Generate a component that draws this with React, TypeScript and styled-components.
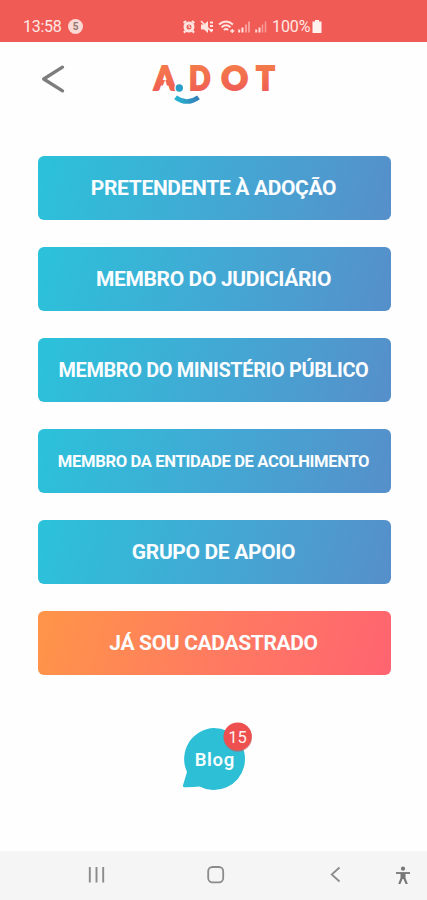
import React from "react";
import styled, { createGlobalStyle } from "styled-components";

const GlobalStyle = createGlobalStyle`
  * { box-sizing: border-box; }
  body { margin: 0; background: #fefefe; font-family: Roboto, "Liberation Sans", sans-serif; }
  svg { display: block; overflow: visible; }
`;

const Screen = styled.div`
  width: 427px;
  height: 900px;
  display: flex;
  flex-direction: column;
  background: #fefefe;
  overflow: hidden;
`;

const StatusBar = styled.header`
  height: 42px;
  flex: none;
  display: flex;
  align-items: center;
  padding: 11px 105px 0 23px;
  background: #f05b56;
  color: #ffe9e4;
  font-size: 16px;
  line-height: 20px;
`;

const Clock = styled.span`
  width: 39px;
  letter-spacing: -0.3px;
`;

const Notice = styled.span`
  width: 15px;
  height: 15px;
  margin-left: 6px;
  border-radius: 50%;
  background: #fcd9d4;
  color: #8f7770;
  font-size: 10px;
  font-weight: 700;
  line-height: 15px;
  text-align: center;
`;

const StatusIcons = styled.div`
  display: flex;
  align-items: center;
  margin-left: auto;
`;

const Percent = styled.span`
  width: 40px;
  letter-spacing: -0.1px;
`;

const TopBar = styled.div`
  height: 114px;
  flex: none;
  display: flex;
  align-items: flex-start;
  padding: 18px 0 0 38px;
`;

const BackButton = styled.button`
  width: 107px;
  height: 38px;
  padding: 0;
  border: 0;
  background: none;
`;

const Menu = styled.main`
  display: flex;
  flex-direction: column;
  gap: 27px;
  padding: 0 36.5px 0 37.5px;
`;

const MenuButton = styled.button<{ $warm?: boolean; $size?: number }>`
  height: 64px;
  padding: 0 1px 0 0;
  border: 0;
  border-radius: 6px;
  display: flex;
  align-items: center;
  justify-content: center;
  white-space: nowrap;
  color: #fbfdff;
  font-family: inherit;
  font-weight: 700;
  letter-spacing: -0.35px;
  background: ${(p) =>
    p.$warm
      ? "linear-gradient(105deg, #ff9548 0%, #ff7b60 50%, #ff6470 100%)"
      : "linear-gradient(105deg, #2bc2da 0%, #42a9d4 50%, #568fca 100%)"};
  font-size: ${(p) => p.$size ?? 21}px;
`;

const BlogRow = styled.div`
  flex: 1;
  display: flex;
  justify-content: center;
  padding: 43px 0 0 6px;
`;

const NavBar = styled.nav`
  height: 49px;
  flex: none;
  background: #f5f5f5;
`;

const entries = [
  { label: "PRETENDENTE À ADOÇÃO" },
  { label: "MEMBRO DO JUDICIÁRIO" },
  { label: "MEMBRO DO MINISTÉRIO PÚBLICO", size: 19.9 },
  { label: "MEMBRO DA ENTIDADE DE ACOLHIMENTO", size: 16.6 },
  { label: "GRUPO DE APOIO" },
  { label: "JÁ SOU CADASTRADO", warm: true },
];

function StatusGlyphs() {
  return (
    <svg width="90" height="16" viewBox="182 18 90 16" fill="none" stroke="#ffe4df">
      <circle cx="189" cy="26" r="4" strokeWidth="3" />
      <path d="M183.6 22l2.5-2M194.4 22l-2.5-2M185.5 30l-1.6 1.6M192.5 30l1.6 1.6" strokeWidth="2.2" />
      <path d="M189 24v2.5h1.5" strokeWidth="1" />
      <path d="M201 23.5h3l4-3.5v12l-4-3.5h-3z" fill="#ffe4df" stroke="none" />
      <path d="M201 20l11 11" strokeWidth="1.5" />
      <path d="M210 21.5h3M210 25h3M210 29h3" strokeWidth="1.8" />
      <path d="M219 23.5q7-6 14 0M221.5 26.3q4.5-4 9 0M223.8 29q2.2-2 4.4 0" strokeWidth="1.9" />
      <path d="M230.3 30h4M232.3 28v4" strokeWidth="1.5" />
      <path d="M239.2 31.5v-3M242.5 31.5v-5" strokeWidth="2" />
      <path d="M246 31.5v-8M249 31.5v-11" strokeWidth="1.6" opacity=".6" />
      <path d="M256.2 31.5v-3M259.5 31.5v-5" strokeWidth="2" opacity=".9" />
      <path d="M262.5 31.5v-8M265.5 31.5v-11" strokeWidth="1.6" opacity=".45" />
    </svg>
  );
}

function Logo() {
  return (
    <svg width="140" height="50" viewBox="145 60 140 50">
      <defs>
        <linearGradient id="coral" gradientUnits="userSpaceOnUse" x1="0" y1="66" x2="0" y2="92">
          <stop offset="0" stopColor="#f47a4a" />
          <stop offset="1" stopColor="#ef5c55" />
        </linearGradient>
        <linearGradient id="smile">
          <stop offset="0" stopColor="#27b5d2" />
          <stop offset="1" stopColor="#367fb8" />
        </linearGradient>
      </defs>
      <g fill="url(#coral)" stroke="url(#coral)" strokeWidth="2" fontFamily="Lato" fontWeight="900" fontSize="33">
        <text x="154" y="90" textLength="21.5" lengthAdjust="spacingAndGlyphs">A</text>
        <text x="189" y="90" textLength="21.5" lengthAdjust="spacingAndGlyphs">D</text>
        <text x="221.3" y="90">O</text>
        <text x="256.3" y="90" textLength="18.4" lengthAdjust="spacingAndGlyphs">T</text>
      </g>
      <path d="M165.2 79.5l-5 13h8.6z" fill="#fefefe" />
      <circle cx="179.3" cy="88" r="5" fill="#fefefe" />
      <circle cx="179.3" cy="88" r="3.7" fill="#299fc8" />
      <path d="M175.5 97.3q11.5 8.4 23 0" fill="none" stroke="url(#smile)" strokeWidth="4.6" />
    </svg>
  );
}

function BlogBubble() {
  return (
    <svg width="80" height="76" viewBox="177 718 80 76">
      <path d="M214 728a31 31 0 1 1-14.5 58.4q-7 1-15.3.8-1.8-.2-1.2-2l4-13.2A31 31 0 0 1 214 728z" fill="#2dbfd6" />
      <text x="194.7" y="766" textLength="39.5" lengthAdjust="spacing" fill="#f7feff" fontFamily="Roboto" fontWeight="600" fontSize="18.5">Blog</text>
      <circle cx="237.7" cy="737.5" r="14.3" fill="#bc5960" opacity=".6" />
      <circle cx="237.7" cy="736.5" r="14" fill="#ee504f" />
      <text x="237.5" y="742.5" textAnchor="middle" fill="#fff3ef" fontFamily="Roboto" fontSize="16.5">15</text>
    </svg>
  );
}

function NavIcons() {
  return (
    <svg width="427" height="49" viewBox="0 851 427 49" fill="none" stroke="#8b8b8b">
      <path d="M89.8 867v15.5M96.5 867v15.5M103.2 867v15.5" strokeWidth="1.9" />
      <rect x="208.2" y="867" width="15" height="15.3" rx="4.3" strokeWidth="1.8" />
      <path d="M339.5 867.5l-7.8 7 7.8 7" strokeWidth="1.8" />
      <circle cx="403" cy="868.7" r="2.1" fill="#777" stroke="none" />
      <path d="M396 873h14" stroke="#777" strokeWidth="1.8" />
      <path d="M400.5 873h5v5l2.3 6h-2.2l-2.1-5h-1l-2.1 5h-2.2l2.3-6z" fill="#777" stroke="none" />
    </svg>
  );
}

export default function App() {
  return (
    <Screen>
      <GlobalStyle />
      <StatusBar>
        <Clock>13:58</Clock>
        <Notice>5</Notice>
        <StatusIcons>
          <StatusGlyphs />
          <Percent>100%</Percent>
          <svg width="10" height="14" viewBox="0 0 10 14">
            <path d="M3 0h4v1.5h2.5V13h-9V1.5H3z" fill="#fff1ee" />
          </svg>
        </StatusIcons>
      </StatusBar>
      <TopBar>
        <BackButton aria-label="Voltar">
          <svg width="30" height="38" viewBox="38 60 30 38">
            <path d="M62.5 67.2L43.7 79l18.8 11.8" fill="none" stroke="#7d7d7d" strokeWidth="3.3" strokeLinecap="round" strokeLinejoin="round" />
          </svg>
        </BackButton>
        <Logo />
      </TopBar>
      <Menu>
        {entries.map((e) => (
          <MenuButton key={e.label} $warm={e.warm} $size={e.size}>
            {e.label}
          </MenuButton>
        ))}
      </Menu>
      <BlogRow>
        <BlogBubble />
      </BlogRow>
      <NavBar>
        <NavIcons />
      </NavBar>
    </Screen>
  );
}
